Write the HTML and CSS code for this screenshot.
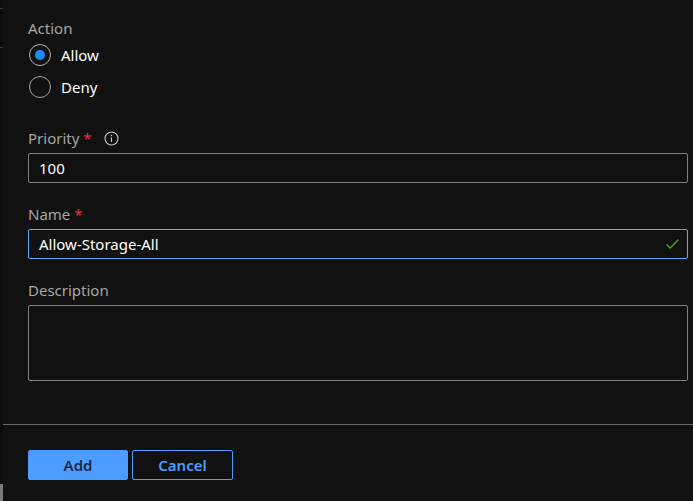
FILE: index.html
```html
<!DOCTYPE html>
<html>
<head>
<meta charset="utf-8">
<link rel="stylesheet" href="styles.css">
</head>
<body>
<div class="screen">
  <div class="edge">
    <div class="edge-mark m1"></div>
    <div class="edge-mark m2"></div>
    <div class="edge-fill"></div>
    <div class="edge-block"></div>
  </div>
  <div class="panel">
    <div class="form">
      <div class="label">Action</div>
      <div class="radios">
        <div class="radio-row">
          <span class="radio checked"><span class="dot"></span></span>
          <span class="radio-text">Allow</span>
        </div>
        <div class="radio-row">
          <span class="radio"></span>
          <span class="radio-text">Deny</span>
        </div>
      </div>

      <div class="label field-label">Priority <span class="req">*</span>
        <svg class="info" width="15" height="15" viewBox="0 0 15 15"><circle cx="7.5" cy="7.5" r="6.5" fill="none" stroke="#c8c8c8" stroke-width="1.1"/><rect x="6.95" y="6.3" width="1.1" height="4.6" fill="#c8c8c8"/><circle cx="7.5" cy="4.5" r="0.75" fill="#c8c8c8"/></svg>
      </div>
      <div class="input">100</div>

      <div class="label field-label">Name <span class="req">*</span></div>
      <div class="input focused">
        <span>Allow-Storage-All</span>
        <svg class="check" width="15" height="12" viewBox="0 0 15 12"><path d="M1.5 6.5 L5.2 10 L13.5 1.5" fill="none" stroke="#57a300" stroke-width="1.4"/></svg>
      </div>

      <div class="label field-label">Description</div>
      <div class="textarea"></div>
    </div>
    <div class="divider"></div>
    <div class="footer">
      <button class="btn primary">Add</button>
      <button class="btn secondary">Cancel</button>
    </div>
  </div>
</div>
</body>
</html>
```
FILE: styles.css
```css
* { box-sizing: border-box; }
html, body {
  margin: 0;
  padding: 0;
  background: #111111;
}
body {
  font-family: "Noto Sans", "Open Sans", sans-serif;
  font-size: 15px;
  color: #ffffff;
  width: 693px;
  height: 501px;
  overflow: hidden;
}
.screen {
  display: flex;
  height: 501px;
}
.edge {
  width: 3px;
  flex: none;
  background: #0c0c0c;
  display: flex;
  flex-direction: column;
}
.edge-mark {
  height: 1px;
  background: #3a3a3a;
}
.edge-mark.m1 { margin-top: 8px; }
.edge-mark.m2 { margin-top: 38px; }
.edge-fill { flex: 1; }
.edge-block {
  height: 17px;
  background: #7a7a7a;
}
.panel {
  flex: 1;
  display: flex;
  flex-direction: column;
}
.form {
  padding: 18px 5px 0 25px;
  display: flex;
  flex-direction: column;
}
.label {
  height: 20px;
  line-height: 20px;
  color: #a6a6a6;
  font-size: 15px;
  display: flex;
  align-items: center;
}
.req {
  color: #e8313f;
  margin-left: 4px;
}
.info {
  margin-left: 12px;
}
.field-label {
  margin-bottom: 5px;
}
.radios {
  margin-top: 1px;
  margin-bottom: 25px;
  display: flex;
  flex-direction: column;
}
.radio-row {
  height: 32px;
  display: flex;
  align-items: center;
}
.radio {
  width: 22px;
  height: 22px;
  border-radius: 50%;
  border: 1px solid #a0a0a0;
  display: flex;
  align-items: center;
  justify-content: center;
  margin-left: 1px;
}
.radio.checked { border-color: #b0b0b0; }
.dot {
  width: 10px;
  height: 10px;
  border-radius: 50%;
  background: #1a8cff;
}
.radio-text {
  margin-left: 10px;
  font-size: 15px;
  color: #ffffff;
}
.input {
  height: 30px;
  border: 1px solid #7d7d7d;
  border-radius: 2px;
  padding: 0 10px;
  display: flex;
  align-items: center;
  justify-content: space-between;
  color: #ffffff;
  font-size: 15px;
  margin-bottom: 21px;
}
.input.focused {
  border-color: #5ca8f0;
}
.check {
  margin-right: -3px;
}
.textarea {
  height: 76px;
  border: 1px solid #7d7d7d;
  border-radius: 2px;
}
.divider {
  margin-top: 43px;
  height: 1px;
  background: #6a6a6a;
}
.footer {
  padding: 25px 0 0 25px;
  display: flex;
  gap: 4px;
}
.btn {
  height: 30px;
  width: 100px;
  border-radius: 2px;
  font-family: "Noto Sans", "Open Sans", sans-serif;
  font-size: 15px;
  font-weight: 600;
  padding: 0;
  line-height: 28px;
}
.btn.primary {
  background: #4c9dff;
  border: 1px solid #4c9dff;
  color: #1c2a3d;
}
.btn.secondary {
  width: 101px;
  background: transparent;
  border: 1px solid #4c9dff;
  color: #4c9dff;
}
```
